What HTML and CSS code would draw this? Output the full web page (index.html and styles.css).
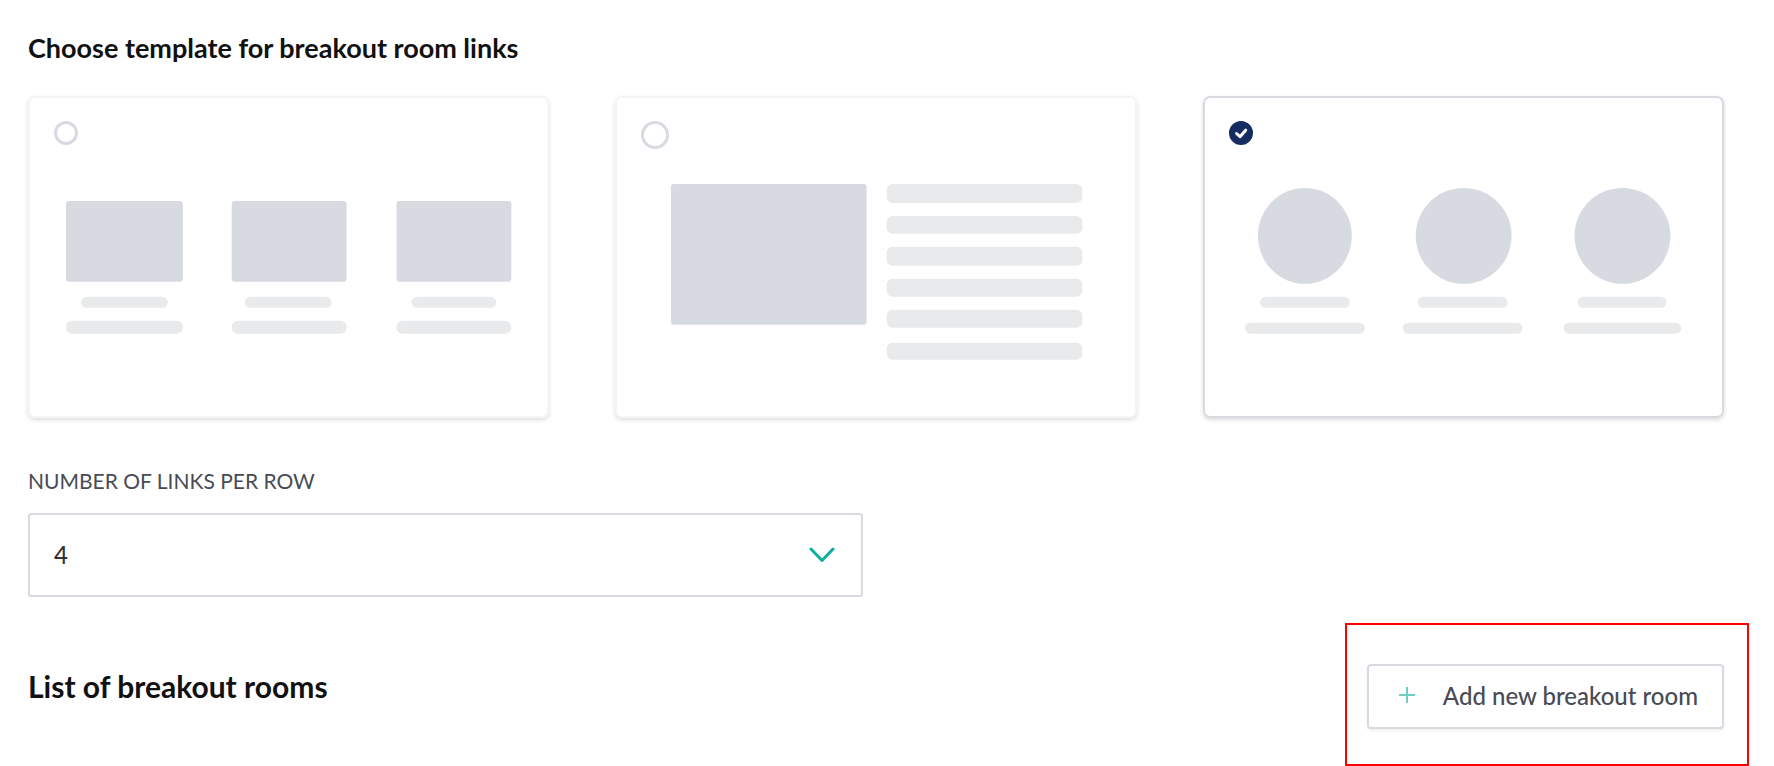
FILE: index.html
```html
<!DOCTYPE html>
<html lang="en">
<head>
    <meta charset="UTF-8">
    <meta name="viewport" content="width=device-width, initial-scale=1.0">
    <title>Breakout rooms</title>
    <link rel="stylesheet" href="styles.css">
</head>
<body>

<form class="page">
    <h2 id="templateTitle">Choose template for breakout room links</h2>

    <div class="templates" role="radiogroup" aria-labelledby="templateTitle">
        <label class="template">
            <span class="radio">
                <input type="radio" name="template" value="cards" aria-label="Cards">
                <svg class="check" viewBox="0 0 24 24"><path d="M7.500 12.500l3.500 3.200 5.700-6.500"/></svg>
            </span>
            <svg class="preview" viewBox="0 0 470 244">
                <g class="image">
                    <rect x="12" y="52" width="117" height="81" rx="3"/>
                    <rect x="178" y="52" width="115" height="81" rx="3"/>
                    <rect x="343" y="52" width="115" height="81" rx="3"/>
                </g>
                <g class="line">
                    <rect x="27" y="148" width="87" height="11" rx="5.5"/>
                    <rect x="191" y="148" width="87" height="11" rx="5.5"/>
                    <rect x="358" y="148" width="85" height="11" rx="5.5"/>
                    <rect x="12" y="172" width="117" height="13" rx="6"/>
                    <rect x="178" y="172" width="115" height="13" rx="6"/>
                    <rect x="343" y="172" width="115" height="13" rx="6"/>
                </g>
            </svg>
        </label>

        <label class="template">
            <span class="radio radio-large">
                <input type="radio" name="template" value="list" aria-label="List">
                <svg class="check" viewBox="0 0 24 24"><path d="M7.500 12.500l3.500 3.200 5.700-6.500"/></svg>
            </span>
            <svg class="preview" viewBox="0 0 470 244">
                <g class="image">
                    <rect x="30" y="35" width="196" height="141" rx="3"/>
                </g>
                <g class="line">
                    <rect x="246" y="35" width="196" height="19" rx="6"/>
                    <rect x="246" y="67" width="196" height="18" rx="6"/>
                    <rect x="246" y="98" width="196" height="19" rx="6"/>
                    <rect x="246" y="130" width="196" height="18" rx="6"/>
                    <rect x="246" y="161" width="196" height="18" rx="6"/>
                    <rect x="246" y="194" width="196" height="17" rx="6"/>
                </g>
            </svg>
        </label>

        <label class="template">
            <span class="radio">
                <input type="radio" name="template" value="circles" aria-label="Circles" checked>
                <svg class="check" viewBox="0 0 24 24"><path d="M7.500 12.500l3.500 3.200 5.700-6.500"/></svg>
            </span>
            <svg class="preview" viewBox="0 0 470 244">
                <g class="image">
                    <ellipse cx="76" cy="87" rx="47" ry="48"/>
                    <circle cx="235" cy="87" r="48"/>
                    <circle cx="394" cy="87" r="48"/>
                </g>
                <g class="line">
                    <rect x="31" y="148" width="90" height="11" rx="5.5"/>
                    <rect x="189" y="148" width="90" height="11" rx="5.5"/>
                    <rect x="349" y="148" width="89" height="11" rx="5.5"/>
                    <rect x="16" y="174" width="120" height="11" rx="5.5"/>
                    <rect x="174" y="174" width="120" height="11" rx="5.5"/>
                    <rect x="335" y="174" width="118" height="11" rx="5.5"/>
                </g>
            </svg>
        </label>
    </div>

    <div class="fields">
        <div class="field">
            <label for="linksPerRow">Number of links per row</label>
            <div class="select">
                <select id="linksPerRow">
                    <option>1</option>
                    <option>2</option>
                    <option>3</option>
                    <option selected>4</option>
                </select>
                <svg class="arrow" viewBox="0 0 26 16"><path d="M2 2l11 11.500L24 2"/></svg>
            </div>
        </div>
    </div>

    <div class="rooms">
        <h2 class="rooms-title">List of breakout rooms</h2>
        <div class="highlight">
            <button type="button" class="add-room">
                <svg class="plus" viewBox="0 0 16 16"><path d="M8 0v16M0 8h16"/></svg>
                Add new breakout room
            </button>
        </div>
    </div>
</form>

</body>
</html>
```
FILE: styles.css
```css
* {
    box-sizing: border-box;
}
body {
    margin: 0;
    background-color: #fff;
    font-family: Lato, "Liberation Sans", sans-serif;
    color: #111;
}
.page {
    padding: 32px 50px 0 28px;
}
h2 {
    margin: 0;
    font-size: 27px;
    line-height: 32px;
    font-weight: bold;
}

/* templates */
.templates {
    display: grid;
    grid-template-columns: repeat(3, 1fr);
    gap: 66px;
    margin-top: 32px;
}
.template {
    display: block;
    padding: 23px 24px;
    border: 2px solid #f5f5f5;
    border-radius: 7px;
    box-shadow: 0 2px 4px rgba(0, 0, 0, 0.14);
    cursor: pointer;
}
.template:has(input:checked) {
    border-color: #d7dae1;
}
.radio {
    display: grid;
    width: 24px;
    height: 28px;
    align-items: start;
}
.radio-large {
    width: 28px;
}
.radio input {
    grid-area: 1 / 1;
    appearance: none;
    width: 100%;
    aspect-ratio: 1;
    margin: 0;
    border: 3px solid #d7dae1;
    border-radius: 50%;
}
.radio input:checked {
    border-color: #162d62;
    background-color: #162d62;
}
.check {
    grid-area: 1 / 1;
    display: none;
    width: 100%;
    fill: none;
    stroke: #fff;
    stroke-width: 3;
    stroke-linecap: round;
    stroke-linejoin: round;
    z-index: 1;
}
input:checked + .check {
    display: block;
}
.preview {
    display: block;
    width: 100%;
}
.image { fill: #d7dae1; }
.line { fill: #e9eaeb; }

/* links per row */
.fields {
    display: grid;
    grid-template-columns: repeat(2, 1fr);
    gap: 26px;
    margin-top: 51px;
}
.field label {
    display: block;
    font-size: 21px;
    line-height: 24px;
    text-transform: uppercase;
    color: #484b55;
}
.select {
    display: grid;
    align-items: center;
    margin-top: 20px;
}
.select select {
    grid-area: 1 / 1;
    appearance: none;
    width: 100%;
    height: 84px;
    padding: 0 24px;
    border: 2px solid #d7dae1;
    border-radius: 3px;
    background-color: #fff;
    font: inherit;
    font-size: 24px;
    font-weight: 500;
    color: #333;
}
.arrow {
    grid-area: 1 / 1;
    justify-self: end;
    width: 26px;
    margin-right: 28px;
    fill: none;
    stroke: #0aafa0;
    stroke-width: 3;
    stroke-linecap: round;
    stroke-linejoin: round;
    pointer-events: none;
    z-index: 1;
}

/* rooms */
.rooms {
    display: flex;
    justify-content: space-between;
    align-items: flex-start;
    margin-top: 26px;
    margin-right: -25px;
}
.rooms-title {
    margin-top: 47px;
    font-size: 30px;
}
.highlight {
    padding: 39px 23px 35px 20px;
    border: 2px solid #ff0000;
}
.add-room {
    display: flex;
    align-items: center;
    gap: 28px;
    height: 65px;
    padding: 0 24px 2px 30px;
    border: 2px solid #d7dae1;
    border-radius: 4px;
    background-color: #fff;
    box-shadow: 0 2px 3px rgba(0, 0, 0, 0.06);
    font: inherit;
    font-size: 24px;
    font-weight: 500;
    color: #484b55;
    cursor: pointer;
}
.plus {
    width: 16px;
    stroke: #6fcdc2;
    stroke-width: 2;
}
```
